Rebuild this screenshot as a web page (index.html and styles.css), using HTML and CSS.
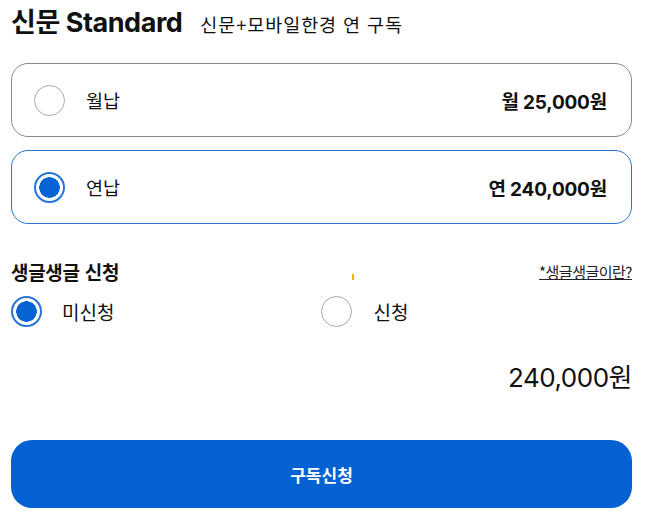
FILE: index.html
```html
<!DOCTYPE html>
<html lang="ko">
<head>
<meta charset="utf-8">
<link rel="stylesheet" href="styles.css">
</head>
<body>
<div class="page">
  <div class="header">
    <h1 class="title">신문 Standard</h1>
    <span class="subtitle">신문+모바일한경 연 구독</span>
  </div>
  <div class="options">
    <label class="card">
      <span class="radio"></span>
      <span class="card-label">월납</span>
      <span class="card-price">월 25,000원</span>
    </label>
    <label class="card card-active">
      <span class="radio radio-on"></span>
      <span class="card-label">연납</span>
      <span class="card-price">연 240,000원</span>
    </label>
  </div>
  <div class="section-head">
    <span class="section-title">생글생글 신청</span>
    <span class="mark"></span>
    <a class="section-link">*생글생글이란?</a>
  </div>
  <div class="choice-row">
    <label class="choice"><span class="radio radio-on"></span><span class="choice-label">미신청</span></label>
    <label class="choice choice-second"><span class="radio"></span><span class="choice-label">신청</span></label>
  </div>
  <div class="total">240,000원</div>
  <button class="submit">구독신청</button>
</div>
</body>
</html>
```
FILE: styles.css
```css
* { box-sizing: border-box; }
html, body { margin: 0; padding: 0; background: #fff; }
body {
  font-family: "Inter", "Noto Sans CJK KR", sans-serif;
  color: #111;
}
.page {
  width: 651px;
  padding: 6px 19px 0 11px;
}
.header {
  display: flex;
  align-items: baseline;
  gap: 18px;
  height: 34px;
}
.title {
  margin: 0;
  font-size: 27px;
  font-weight: 700;
  letter-spacing: -0.45px;
  line-height: 34px;
}
.subtitle {
  font-family: "Noto Sans CJK KR", sans-serif;
  font-size: 18.5px;
  letter-spacing: 0.9px;
}
.options {
  display: flex;
  flex-direction: column;
  gap: 13px;
  margin-top: 23px;
}
.card {
  display: flex;
  align-items: center;
  height: 74px;
  border: 1px solid #8a8a8a;
  border-radius: 17px;
  padding: 0 24px 0 22px;
}
.card-active { border-color: #2574d8; }
.radio {
  flex: none;
  width: 31px;
  height: 31px;
  border: 1.5px solid #a8a8a8;
  border-radius: 50%;
  background: #fff;
}
.radio-on {
  border: 2px solid #2574d8;
  background: radial-gradient(circle, #0563d3 0 10px, #fff 10.5px);
}
.card-label {
  margin-left: 21px;
  font-family: "Noto Sans CJK KR", sans-serif;
  font-size: 18.5px;
}
.card-price {
  margin-left: auto;
  font-size: 19px;
  font-weight: 700;
  letter-spacing: -0.2px;
}
.section-head {
  position: relative;
  display: flex;
  justify-content: space-between;
  align-items: center;
  margin-top: 34px;
  height: 26px;
}
.section-title {
  font-family: "Noto Sans CJK KR", sans-serif;
  font-size: 19px;
  font-weight: 700;
  letter-spacing: -0.3px;
}
.section-link {
  font-family: "Noto Sans CJK KR", sans-serif;
  font-size: 15px;
  color: #222;
  text-decoration: underline;
  letter-spacing: -0.5px;
}
.mark {
  position: absolute;
  left: 341px;
  top: 16px;
  width: 2px;
  height: 6px;
  background: #f2b400;
}
.choice-row {
  display: grid;
  grid-template-columns: 1fr 1fr;
  margin-top: 12px;
}
.choice {
  display: flex;
  align-items: center;
  gap: 20px;
}
.choice-second { margin-left: -1px; gap: 22px; }
.choice-label {
  font-family: "Noto Sans CJK KR", sans-serif;
  font-size: 19px;
}
.total {
  margin-top: 34px;
  text-align: right;
  font-size: 26px;
  font-weight: 400;
  letter-spacing: -0.5px;
  line-height: 34px;
}
.submit {
  display: block;
  width: 100%;
  height: 68px;
  margin-top: 45px;
  border: 0;
  border-radius: 21px;
  background: #0461d2;
  color: #fff;
  font-family: "Noto Sans CJK KR", sans-serif;
  font-size: 17px;
  font-weight: 700;
}
```
